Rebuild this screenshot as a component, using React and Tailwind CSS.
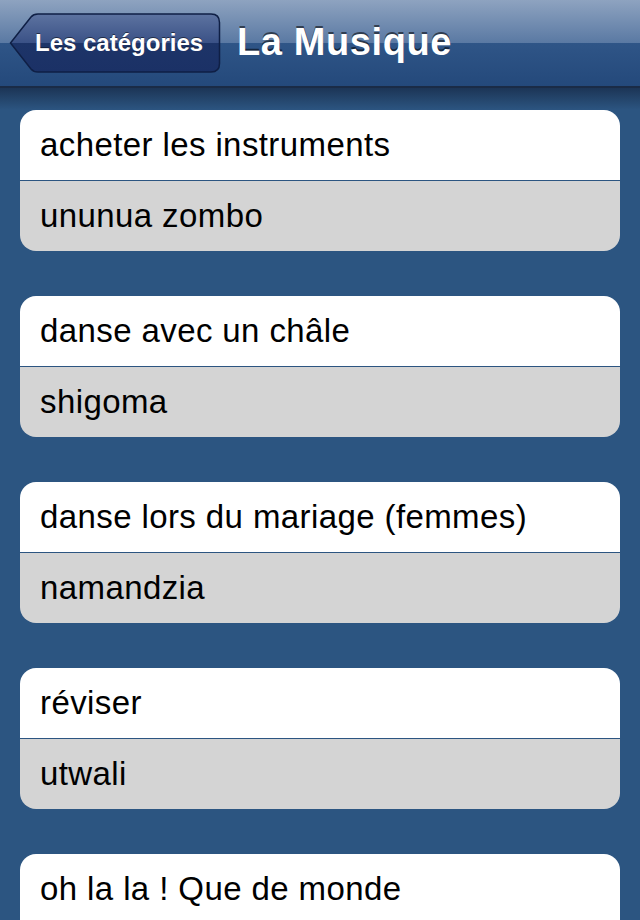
const rows = [
  { fr: 'acheter les instruments', sw: 'ununua zombo' },
  { fr: 'danse avec un châle', sw: 'shigoma' },
  { fr: 'danse lors du mariage (femmes)', sw: 'namandzia' },
  { fr: 'réviser', sw: 'utwali' },
  { fr: 'oh la la ! Que de monde', sw: '' },
];

function BackButton() {
  return (
    <button className="relative w-[212px] h-[60px] shrink-0">
      <svg className="absolute inset-0" width="212" height="60" viewBox="0 0 212 60">
        <defs>
          <linearGradient id="bb" x1="0" y1="0" x2="0" y2="1">
            <stop offset="0" stopColor="#5d73a0" />
            <stop offset="0.5" stopColor="#3a5186" />
            <stop offset="0.5" stopColor="#1d3468" />
            <stop offset="1" stopColor="#1b3166" />
          </linearGradient>
        </defs>
        <path
          d="M1.5 30 L22 4 Q24.5 1 29 1 L202 1 Q210.5 1 210.5 9.5 L210.5 50.5 Q210.5 59 202 59 L29 59 Q24.5 59 22 56 Z"
          fill="url(#bb)"
          stroke="#0f1f45"
          strokeWidth="1.5"
        />
      </svg>
      <span className="relative block pl-[26px] text-left text-white font-bold text-[24px] [text-shadow:0_-1px_0_rgba(0,0,0,0.5)]">
        Les catégories
      </span>
    </button>
  );
}

export default function App() {
  return (
    <div
      className="w-[640px] h-[920px] overflow-hidden bg-[#2c5581]"
      style={{ fontFamily: '"Liberation Sans", Arial, sans-serif' }}
    >
      {/* Nav bar */}
      <header className="h-[88px] flex items-center gap-[16px] pl-[9px] border-b-2 border-[#1a2b46] bg-[linear-gradient(to_bottom,#8ea3c0_0%,#5a79a3_50%,#2f5587_50%,#24497b_100%)]">
        <BackButton />
        <h1 className="text-white font-bold text-[38px] tracking-[0.6px] leading-none -mt-[2px] [text-shadow:0_-2px_0_rgba(0,0,0,0.55)]">
          La Musique
        </h1>
      </header>

      {/* Shadow under nav */}
      <div className="h-[22px] bg-[linear-gradient(to_bottom,#1c3556,#2c5581)]" />

      {/* Cards */}
      <main className="flex flex-col gap-[45px] px-[20px]">
        {rows.map((r, i) => (
          <div key={i} className="rounded-[16px] overflow-hidden">
            <div className="h-[70px] bg-white flex items-center px-[20px] text-[33px] tracking-[0.4px] text-black">
              {r.fr}
            </div>
            <div className="h-[1px] bg-[#2c5581]" />
            <div className="h-[70px] bg-[#d4d4d4] flex items-center px-[20px] text-[33px] tracking-[0.4px] text-black">
              {r.sw}
            </div>
          </div>
        ))}
      </main>
    </div>
  );
}
